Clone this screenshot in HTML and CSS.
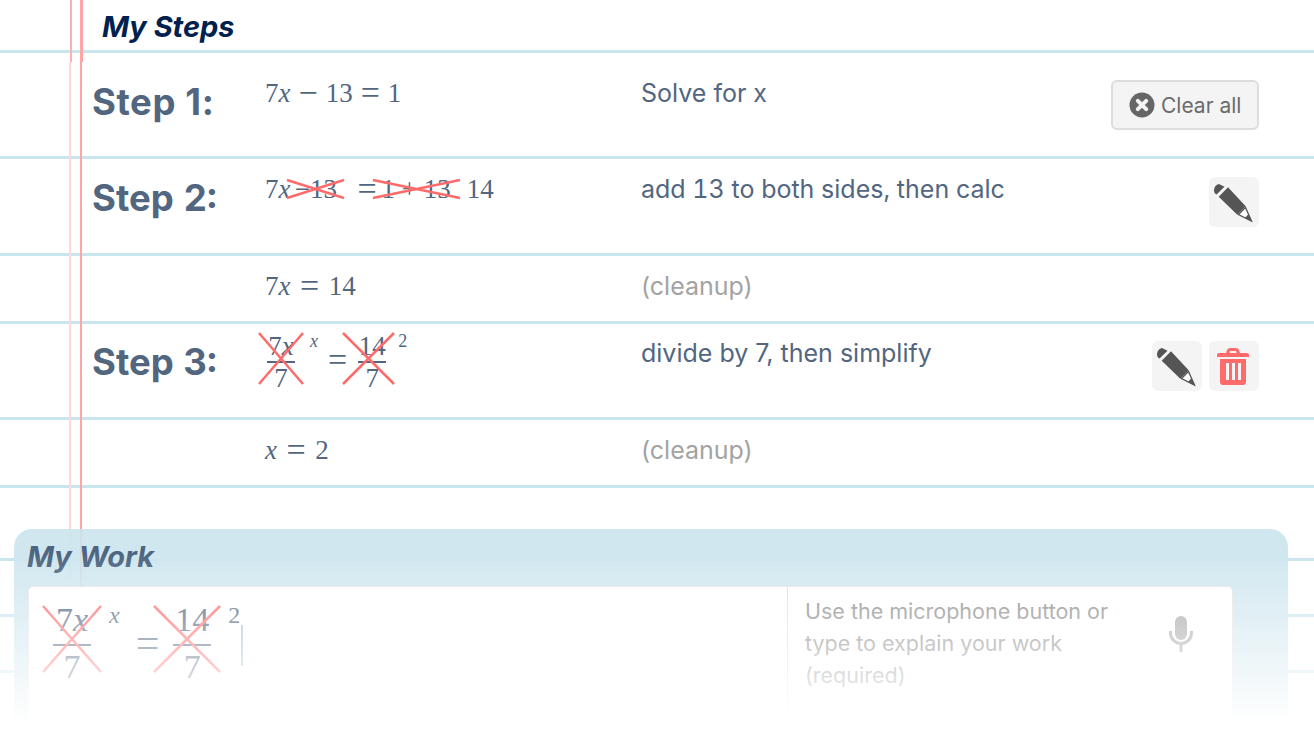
FILE: index.html
```html
<!DOCTYPE html>
<html lang="en">
<head>
    <meta charset="UTF-8">
    <meta name="viewport" content="width=device-width, initial-scale=1.0">
    <title>My Steps</title>
    <link rel="stylesheet" href="styles.css">
</head>
<body>

<div class="page">
    <div class="paper">
        <h2 class="steps-title">My Steps</h2>

        <div class="row row-first">
            <div class="step-label">Step 1:</div>
            <div class="math"><span>7<i>x</i></span><span class="op">−</span><span>13</span><span class="op">=</span><span>1</span></div>
            <div class="note">Solve for x</div>
            <div class="actions">
                <button class="clear-btn">
                    <svg class="clear-icon" viewBox="0 0 26 26"><circle cx="13" cy="13" r="12.5" fill="#666"/><path d="M8.8 8.8l8.4 8.4M17.2 8.8l-8.4 8.4" stroke="#f4f4f4" stroke-width="4" stroke-linecap="round"/></svg>
                    Clear all
                </button>
            </div>
        </div>

        <div class="row row-second">
            <div class="step-label">Step 2:</div>
            <div class="math">
                <span>7<i>x</i></span>
                <span class="cancel cancel-a">−13<svg class="cross" viewBox="0 0 100 100" preserveAspectRatio="none"><path d="M0 0L100 100M100 0L0 100" vector-effect="non-scaling-stroke"/></svg></span>
                <span class="op op-eq">=</span>
                <span class="cancel cancel-b">1 + 13<svg class="cross" viewBox="0 0 100 100" preserveAspectRatio="none"><path d="M0 0L100 100M100 0L0 100" vector-effect="non-scaling-stroke"/></svg></span>
                <span class="after-cancel">14</span>
            </div>
            <div class="note">add 13 to both sides, then calc</div>
            <div class="actions">
                <button class="icon-btn">
                    <svg viewBox="0 0 50 50"><path class="pencil" d="M5 13q.5-5 5-6l5.500 2.700-8 7.800q-2.500-1-2.500-4.500zM9.700 19.700L19 10.300 36.700 29.300 28.300 37.700z"/><path class="pencil-tip" d="M29.500 37.500L36.500 30.500 42.500 44z"/><path class="pencil" d="M39.500 37l-3.500 4 7 3.500z"/></svg>
                </button>
            </div>
        </div>

        <div class="row row-short">
            <div class="step-label"></div>
            <div class="math"><span>7<i>x</i></span><span class="op">=</span><span>14</span></div>
            <div class="note note-muted">(cleanup)</div>
        </div>

        <div class="row row-third">
            <div class="step-label">Step 3:</div>
            <div class="math math-tall">
                <span class="cancel cancel-frac">
                    <span class="frac"><span class="num">7<i>x</i></span><span class="den">7</span></span>
                    <svg class="cross" viewBox="0 0 100 100" preserveAspectRatio="none"><path d="M0 0L100 100M100 0L0 100" vector-effect="non-scaling-stroke"/></svg>
                </span>
                <span class="res"><i>x</i></span>
                <span class="op op-tall">=</span>
                <span class="cancel cancel-frac cancel-frac-b">
                    <span class="frac"><span class="num">14</span><span class="den">7</span></span>
                    <svg class="cross" viewBox="0 0 100 100" preserveAspectRatio="none"><path d="M0 0L100 100M100 0L0 100" vector-effect="non-scaling-stroke"/></svg>
                </span>
                <span class="res res-b">2</span>
            </div>
            <div class="note">divide by 7, then simplify</div>
            <div class="actions">
                <button class="icon-btn">
                    <svg viewBox="0 0 50 50"><path class="pencil" d="M5 13q.5-5 5-6l5.500 2.700-8 7.800q-2.500-1-2.500-4.500zM9.700 19.700L19 10.300 36.700 29.300 28.300 37.700z"/><path class="pencil-tip" d="M29.500 37.500L36.500 30.500 42.500 44z"/><path class="pencil" d="M39.500 37l-3.500 4 7 3.500z"/></svg>
                </button>
                <button class="icon-btn">
                    <svg viewBox="0 0 50 50"><path class="trash" d="M17 12l1-3q1-2 3-2h6q2 0 3 2l1 3h7q2 0 2 2v2H8v-2q0-2 2-2zM20.500 12h7l-.5-2h-6zM11 18h26v23q0 3-3 3H14q-3 0-3-3zM17 22v17h3V22zM23 22v17h3V22zM29 22v17h3V22z"/></svg>
                </button>
            </div>
        </div>

        <div class="row row-short">
            <div class="step-label"></div>
            <div class="math"><span><i>x</i></span><span class="op">=</span><span>2</span></div>
            <div class="note note-muted">(cleanup)</div>
        </div>

        <div class="blank-line blank-line-first"></div>
        <div class="blank-line"></div>
        <div class="blank-line"></div>
    </div>

    <!-- margin rules, drawn in two pieces like the sheet and the table -->
    <div class="rule rule-thin-top"></div>
    <div class="rule rule-thick-top"></div>
    <div class="rule rule-thin"></div>
    <div class="rule rule-thick"></div>

    <div class="work-panel">
        <h2 class="work-title">My Work</h2>
        <div class="work-card">
            <div class="work-math">
                <span class="cancel big-cancel">
                    <span class="frac big-frac"><span class="num">7<i>x</i></span><span class="den">7</span></span>
                    <svg class="cross" viewBox="0 0 100 100" preserveAspectRatio="none"><path d="M0 0L100 100M100 0L0 100" vector-effect="non-scaling-stroke"/></svg>
                </span>
                <span class="big-res"><i>x</i></span>
                <span class="big-op">=</span>
                <span class="cancel big-cancel big-cancel-b">
                    <span class="frac big-frac"><span class="num">14</span><span class="den">7</span></span>
                    <svg class="cross" viewBox="0 0 100 100" preserveAspectRatio="none"><path d="M0 0L100 100M100 0L0 100" vector-effect="non-scaling-stroke"/></svg>
                </span>
                <span class="big-res">2</span>
                <span class="caret"></span>
            </div>
            <div class="work-explain">
                <div class="placeholder">Use the microphone button or type to explain your work (required)</div>
                <svg class="mic" viewBox="0 0 24 36"><rect x="6" y="0" width="12" height="24" rx="6" fill="#a8a8a8"/><path d="M1.500 15v2a10.500 10.500 0 0 0 21 0v-2M12 27.500V36" fill="none" stroke="#a8a8a8" stroke-width="3"/></svg>
            </div>
        </div>
    </div>

    <div class="fade"></div>
</div>

</body>
</html>
```

FILE: styles.css
```css
body {
    margin: 0;
    font-family: Inter, "Liberation Sans", sans-serif;
    background: #fff;
}
.page {
    position: relative;
    height: 730px;
    overflow: hidden;
}

.steps-title {
    box-sizing: border-box;
    height: 53px;
    margin: 0;
    padding: 8px 0 0 102px;
    border-bottom: 3px solid #c9e5ee;
    font-size: 29px;
    line-height: 38px;
    font-style: italic;
    font-weight: 700;
    color: #00214d;
}

.row {
    box-sizing: border-box;
    display: grid;
    grid-template-columns: 172px 376px 1fr auto;
    height: 96px;
    padding: 12px 55px 0 93px;
    border-bottom: 3px solid #c9e5ee;
}
.row-first {
    height: 106px;
    padding-top: 22px;
}
.row-first .actions {
    margin-top: 5px;
}
.row-first .step-label {
    font-variant-numeric: normal;
    letter-spacing: 0.6px;
}
.row-second {
    height: 97px;
}
.row-second .note {
    font-variant-numeric: tabular-nums;
}
.row-third {
    padding-top: 11px;
}
.row-short {
    height: 68px;
}
.step-label {
    margin: 6px 0 0 -1px;
    font-size: 36.500px;
    line-height: 42px;
    font-weight: 700;
    font-variant-numeric: tabular-nums;
    color: #52667f;
}

.math {
    display: flex;
    align-items: center;
    height: 36px;
    font-family: "Liberation Serif", serif;
    font-size: 27px;
    line-height: 36px;
    color: #52667f;
}
.op {
    margin: 0 8px;
    font-size: 34px;
}
.row-short .op {
    margin: 0 9.500px;
}
.op-eq {
    margin: 0 -4px 0 13px;
}
.after-cancel {
    margin-left: 7px;
}
.note {
    font-size: 25px;
    line-height: 36px;
    color: #52667f;
}
.note-muted {
    color: #a3a3a3;
}

.actions {
    display: flex;
    gap: 7px;
    margin-top: 6px;
}
.icon-btn {
    width: 50px;
    height: 50px;
    padding: 0;
    border: 0;
    border-radius: 6px;
    background: #f4f4f4;
}
.icon-btn svg {
    display: block;
    width: 50px;
    height: 50px;
}
.pencil {
    fill: #555;
}
.pencil-tip {
    fill: #fff;
    stroke: #555;
    stroke-width: 1.300;
}
.trash {
    fill: #ff6b6b;
    fill-rule: evenodd;
}
.clear-btn {
    display: flex;
    align-items: center;
    gap: 6px;
    box-sizing: border-box;
    width: 148px;
    height: 50px;
    padding: 0 0 0 16px;
    border: 2px solid #ddd;
    border-radius: 6px;
    background: #f4f4f4;
    font-family: Inter, "Liberation Sans", sans-serif;
    font-size: 21px;
    color: #6b6b6b;
}
.clear-icon {
    width: 26px;
    height: 26px;
}

/* crossed out terms */
.cancel {
    position: relative;
    display: inline-flex;
    justify-content: center;
    align-items: center;
}
.cross {
    position: absolute;
    left: 0;
    top: 0;
    width: 100%;
    height: 100%;
    overflow: visible;
}
.cross path {
    fill: none;
    stroke: #ff6b6b;
    stroke-width: 2.500;
}
.cancel-a {
    width: 57px;
    height: 18px;
    margin-left: -3px;
}
.cancel-b {
    width: 87px;
    height: 18px;
}
.math-tall {
    height: 51px;
    margin-top: -2px;
}
.cancel-frac {
    width: 44px;
    height: 51px;
    margin-left: -6px;
}
.cancel-frac-b {
    width: 51px;
    margin-left: 0;
    padding-left: 7px;
    box-sizing: border-box;
}
.frac {
    display: flex;
    flex-direction: column;
    align-items: center;
    margin-top: 8px;
    line-height: 28px;
}
.num {
    min-width: 28px;
    padding-bottom: 1px;
    border-bottom: 2px solid #52667f;
    text-align: center;
}
.den {
    line-height: 30px;
}
.res {
    align-self: flex-start;
    margin: -4px 0 0 7px;
    font-size: 18px;
    line-height: 24px;
}
.res-b {
    margin-left: 4px;
}
.op-tall {
    margin: 3px -4px 0 10px;
}

.blank-line {
    box-sizing: border-box;
    height: 56px;
    border-bottom: 3px solid #c9e5ee;
}
.blank-line-first {
    height: 73px;
}

.rule {
    position: absolute;
}
.rule-thin-top {
    left: 70px;
    top: 0;
    width: 2px;
    height: 62px;
    background: #ffb0b0;
}
.rule-thick-top {
    left: 80px;
    top: 0;
    width: 3px;
    height: 62px;
    background: #ffa5a5;
}
.rule-thin {
    left: 69px;
    top: 62px;
    width: 2px;
    height: 540px;
    background: #ffd9d9;
}
.rule-thick {
    left: 80px;
    top: 62px;
    width: 2px;
    height: 540px;
    background: #ffa5a5;
}

.work-panel {
    position: absolute;
    left: 14px;
    top: 529px;
    bottom: 0;
    width: 1274px;
    padding: 0 55px 0 13px;
    box-sizing: border-box;
    border-radius: 18px 18px 0 0;
    background: rgba(203, 228, 237, 0.9);
}
.work-title {
    margin: 0;
    padding-top: 9px;
    height: 47px;
    box-sizing: border-box;
    font-size: 29px;
    line-height: 37px;
    font-style: italic;
    font-weight: 700;
    color: #4d6580;
}
.work-card {
    display: flex;
    height: 180px;
    margin: 10px 0 0 1px;
    border: 1px solid #e4e4e4;
    border-radius: 5px 5px 0 0;
    background: #fff;
}
.work-math {
    display: flex;
    align-items: flex-start;
    box-sizing: border-box;
    width: 759px;
    padding: 19px 0 0 14px;
    border-right: 1px solid #ddd;
    font-family: "Liberation Serif", serif;
    font-size: 34px;
    color: #52667f;
}
.big-cancel {
    width: 58px;
    height: 66px;
}
.big-cancel-b {
    width: 66px;
    margin-left: -5px;
    padding-left: 10px;
    box-sizing: border-box;
}
.big-frac {
    margin-top: 12px;
    line-height: 36px;
}
.big-frac .num {
    min-width: 38px;
    padding-bottom: 6px;
}
.big-frac .den {
    line-height: 42px;
}
.big-res {
    margin: -6px 0 0 8px;
    font-size: 24px;
    line-height: 30px;
}
.big-op {
    margin: 12px 0 0 16px;
    font-size: 42px;
    line-height: 50px;
}
.caret {
    width: 2px;
    height: 41px;
    margin: 19px 0 0 1px;
    background: #a9bdd6;
}
.work-explain {
    display: flex;
    flex: 1;
    justify-content: space-between;
    padding: 8px 39px 0 17px;
}
.placeholder {
    width: 320px;
    font-size: 21.500px;
    line-height: 32px;
    color: #8a8a8a;
}
.mic {
    width: 24px;
    height: 36px;
    margin-top: 21px;
}

.fade {
    position: absolute;
    left: 0;
    right: 0;
    top: 529px;
    bottom: 0;
    background: linear-gradient(to bottom, rgba(255,255,255,0) 12%, rgba(255,255,255,0.45) 50%, #fff 97%);
    pointer-events: none;
}
```
